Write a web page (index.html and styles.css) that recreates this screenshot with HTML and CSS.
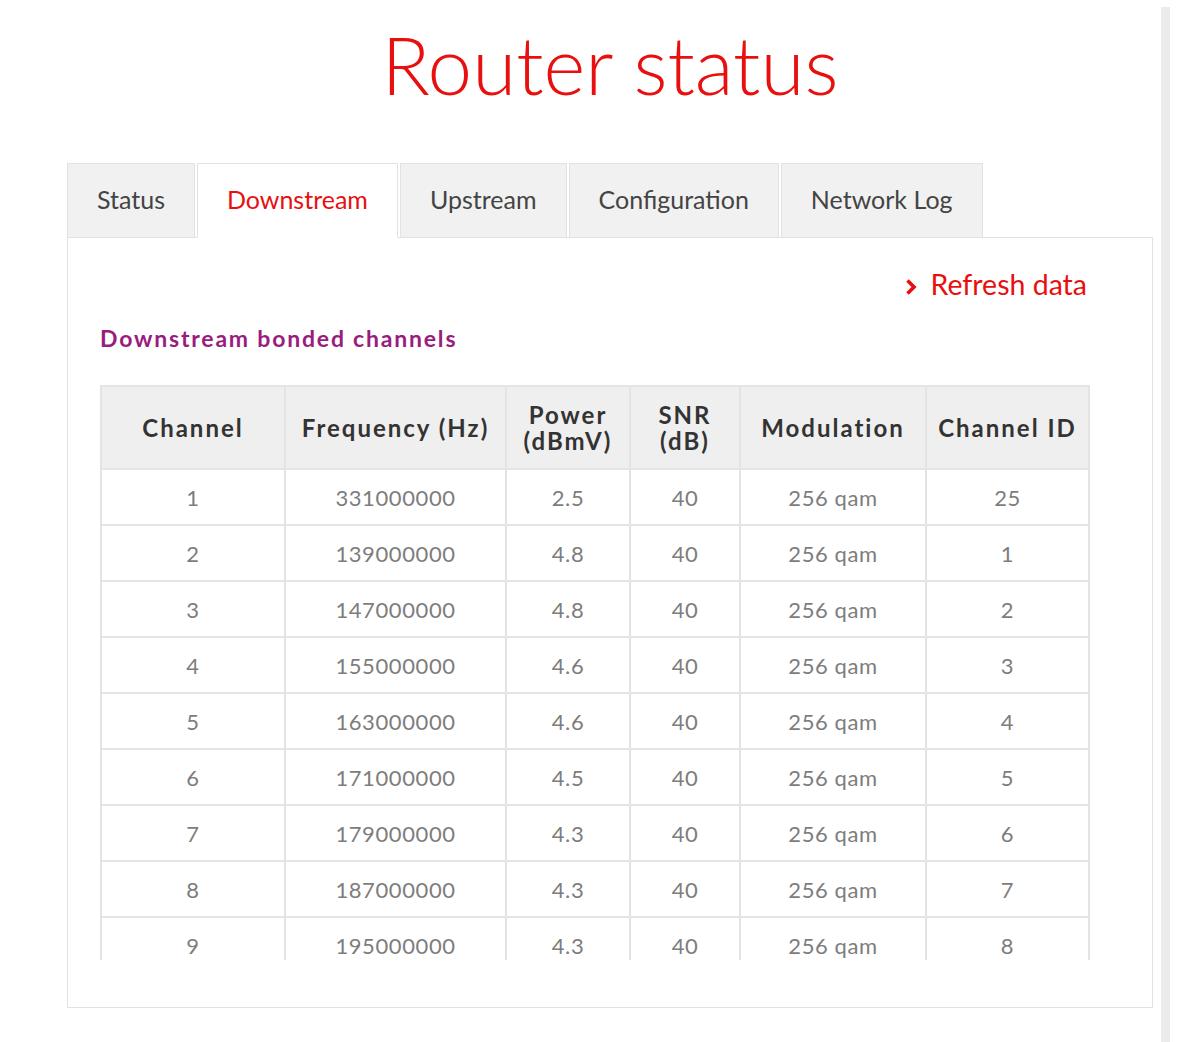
FILE: index.html
```html
<!DOCTYPE html>
<html lang="en">
<head>
    <meta charset="UTF-8">
    <meta name="viewport" content="width=device-width, initial-scale=1.0">
    <title>Router status</title>
    <link rel="stylesheet" href="styles.css">
</head>
<body>

<div class="page">
    <main class="main">
        <h1 class="page-title">Router status</h1>

        <!-- Tabs -->
        <ul class="tabs">
            <li class="tab">Status</li>
            <li class="tab active">Downstream</li>
            <li class="tab">Upstream</li>
            <li class="tab">Configuration</li>
            <li class="tab">Network Log</li>
        </ul>

        <!-- Downstream panel -->
        <section class="panel">
            <div class="refresh-row">
                <a href="#" class="refresh-link">
                    <svg class="chevron" width="12" height="18" viewBox="0 0 12 18"><path d="M2.5 2.5 L9 9 L2.5 15.5" fill="none" stroke="currentColor" stroke-width="3.6" stroke-linejoin="miter"/></svg>
                    Refresh data
                </a>
            </div>

            <h2 class="section-title">Downstream bonded channels</h2>

            <div class="table-wrap">
                <table class="channels">
                    <thead>
                        <tr>
                            <th class="c-chan">Channel</th>
                            <th class="c-freq">Frequency (Hz)</th>
                            <th class="c-pow">Power<br>(dBmV)</th>
                            <th class="c-snr">SNR<br>(dB)</th>
                            <th class="c-mod">Modulation</th>
                            <th class="c-id">Channel ID</th>
                        </tr>
                    </thead>
                    <tbody>
                        <tr><td>1</td><td>331000000</td><td>2.5</td><td>40</td><td>256 qam</td><td>25</td></tr>
                        <tr><td>2</td><td>139000000</td><td>4.8</td><td>40</td><td>256 qam</td><td>1</td></tr>
                        <tr><td>3</td><td>147000000</td><td>4.8</td><td>40</td><td>256 qam</td><td>2</td></tr>
                        <tr><td>4</td><td>155000000</td><td>4.6</td><td>40</td><td>256 qam</td><td>3</td></tr>
                        <tr><td>5</td><td>163000000</td><td>4.6</td><td>40</td><td>256 qam</td><td>4</td></tr>
                        <tr><td>6</td><td>171000000</td><td>4.5</td><td>40</td><td>256 qam</td><td>5</td></tr>
                        <tr><td>7</td><td>179000000</td><td>4.3</td><td>40</td><td>256 qam</td><td>6</td></tr>
                        <tr><td>8</td><td>187000000</td><td>4.3</td><td>40</td><td>256 qam</td><td>7</td></tr>
                        <tr><td>9</td><td>195000000</td><td>4.3</td><td>40</td><td>256 qam</td><td>8</td></tr>
                    </tbody>
                </table>
            </div>
        </section>
    </main>

    <div class="scroll-track"></div>
</div>

</body>
</html>
```

FILE: styles.css
```css
/* General Styling */
body {
    margin: 0;
    padding: 0;
    background: #fff;
    font-family: Lato, "Open Sans", sans-serif;
    color: #444;
}

.page {
    display: flex;
    align-items: stretch;
    min-height: 1042px;
}

.main {
    width: 1086px;
    padding: 0 8px 0 67px;
}

/* fake page scrollbar on the right */
.scroll-track {
    width: 9px;
    margin-top: 7px;
    background: #ebebeb;
}

/* Title */
.page-title {
    margin: 16px 0 0;
    height: 147px;
    text-align: center;
    font-size: 80px;
    line-height: 96px;
    font-weight: 300;
    color: #e8100f;
}

/* Tabs */
.tabs {
    display: flex;
    gap: 2px;
    list-style: none;
    margin: 0;
    padding: 0;
    position: relative;
    z-index: 1;
}

.tab {
    height: 73px;
    line-height: 70px;
    padding: 0 29px;
    font-size: 25px;
    color: #444;
    background: #f1f1f1;
    border: 1px solid #e2e2e2;
}

.tab.active {
    background: #fff;
    color: #e8100f;
    border-bottom-color: #fff;
}

/* Panel */
.panel {
    margin-top: -1px;
    height: 771px;
    box-sizing: border-box;
    padding: 0 62px 0 32px;
    border: 1px solid #e2e2e2;
}

.refresh-row {
    text-align: right;
    padding-top: 29px;
    height: 34px;
}

.refresh-link {
    color: #e8100f;
    text-decoration: none;
    font-size: 28.5px;
    line-height: 34px;
    margin-right: 3px;
}

.chevron {
    vertical-align: -1px;
    margin-right: 6px;
}

.section-title {
    margin: 22px 0 0;
    font-size: 23px;
    line-height: 30px;
    font-weight: 700;
    letter-spacing: 1.8px;
    color: #981d7e;
}

/* Table */
.table-wrap {
    margin-top: 32px;
    height: 575px;
    overflow: hidden;
}

.channels {
    width: 100%;
    border-collapse: collapse;
    text-align: center;
}

.channels th,
.channels td {
    border: 2px solid #e4e4e4;
    padding: 0;
}

.channels th {
    height: 81px;
    background: #efefef;
    color: #333;
    font-size: 24px;
    line-height: 26px;
    font-weight: 700;
    letter-spacing: 2px;
}

.channels td {
    height: 54px;
    color: #7d7d7d;
    font-size: 22px;
    font-weight: 400;
    letter-spacing: 0.6px;
}

.c-chan { width: 182px; }
.c-freq { width: 219px; }
.c-pow { width: 122px; }
.c-snr { width: 108px; }
.c-mod { width: 184px; }
```
